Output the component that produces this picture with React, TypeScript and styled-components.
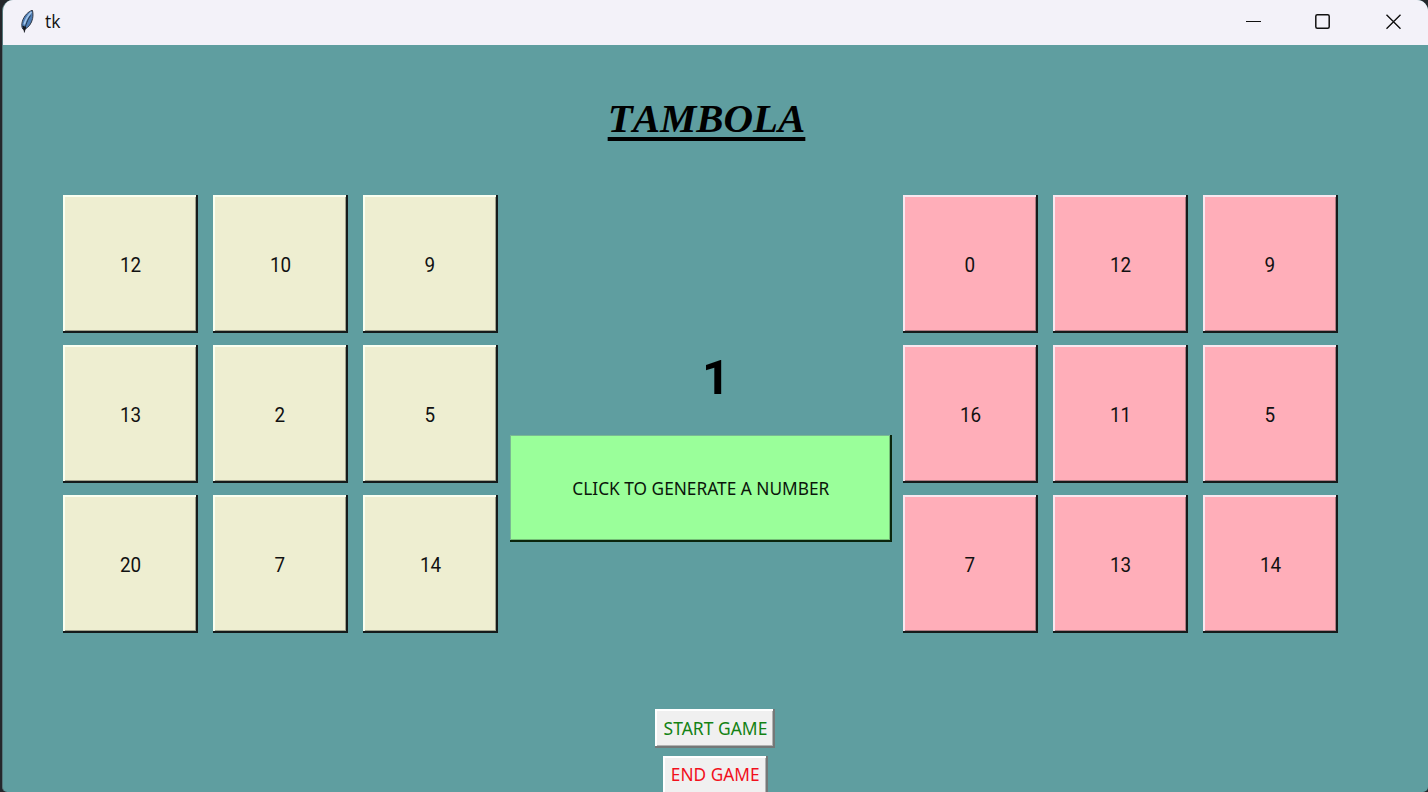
import React from 'react';
import styled, { createGlobalStyle } from 'styled-components';

const GlobalStyle = createGlobalStyle`
  * { box-sizing: border-box; }
  body { margin: 0; background: #24272b; overflow: hidden; }
`;

const Desktop = styled.div`
  width: 1428px;
  height: 792px;
  padding-left: 2px;
  background: #24272b;
  overflow: hidden;
`;

const Window = styled.div`
  height: 792px;
  display: flex;
  flex-direction: column;
  border-left: 1px solid #54777b;
  border-radius: 11px 11px 5px 5px;
  background: #5f9ea0;
  overflow: hidden;
`;

const TitleBar = styled.header`
  flex: 0 0 45px;
  display: flex;
  align-items: center;
  padding-left: 16px;
  background: #f3f2f9;
`;

const Caption = styled.span`
  flex: 1;
  margin: -3px 0 0 9px;
  font: 17.5px/24px 'Open Sans', 'Noto Sans', sans-serif;
  color: #111;
`;

const WindowControls = styled.div`
  display: flex;
  gap: 54px;
  padding: 0 27px 1px 0;
`;

const Content = styled.main`
  flex: 1;
  display: flex;
  flex-direction: column;
  align-items: center;
`;

const Title = styled.h1`
  margin: 50px 18px 0 0;
  height: 100px;
  font: italic bold 40.9px/48px 'Liberation Serif', 'Times New Roman', serif;
  font-kerning: none;
  color: #000;
  text-decoration: underline;
  text-decoration-thickness: 4px;
  text-decoration-skip-ink: none;
  text-underline-offset: 5px;
`;

const Board = styled.section`
  align-self: stretch;
  display: flex;
  height: 438px;
  padding-left: 60px;
`;

const Ticket = styled.div`
  display: grid;
  grid-template-columns: repeat(3, 135px);
  grid-auto-rows: 138px;
  gap: 12px 15px;
`;

const Cell = styled.button<{ $tone: 'beige' | 'pink'; $wide: boolean }>`
  padding: ${p => (p.$wide ? '2px 0 0 1px' : '2px 1px 0 0')};
  border: 0;
  background: ${p => (p.$tone === 'beige' ? '#eeeed1' : '#ffaeb9')};
  box-shadow:
    inset -2px -2px 0 #151b1b,
    inset 2px 2px 0 ${p => (p.$tone === 'beige' ? '#fafff0' : '#f8e8f0')},
    inset -3px -3px 0 ${p => (p.$tone === 'beige' ? '#a3a38d' : '#ae7b82')};
  font: 20.5px/24px Roboto, 'Liberation Sans', sans-serif;
  color: #111;
`;

const Caller = styled.div`
  width: 382px;
  margin: 0 11px 0 12px;
  padding-top: 155px;
  display: flex;
  flex-direction: column;
`;

const Drawn = styled.output`
  height: 85px;
  padding-left: 30px;
  font: bold 49px/56px Roboto, 'Liberation Sans', sans-serif;
  text-align: center;
  color: #000;
`;

const GenerateButton = styled.button`
  height: 107px;
  padding: 0 0 2px;
  border: 0;
  background: #9aff9a;
  box-shadow:
    inset -2px -2px 0 #0b250d,
    inset 1px 1px 0 #79b993,
    inset -3px -3px 0 #73bc75;
  font: 18px/24px 'Noto Sans', sans-serif;
  color: #0b160b;
`;

const ButtonText = styled.span<{ $scale: number }>`
  display: inline-block;
  white-space: nowrap;
  transform: scaleX(${p => p.$scale});
`;

const Actions = styled.div`
  display: flex;
  flex-direction: column;
  align-items: center;
  gap: 8px;
  margin: 76px 1px 0 0;
`;

const ActionButton = styled.button<{ $color: string; $width: number; $lift: number }>`
  width: ${p => p.$width}px;
  height: 39px;
  padding: 0 0 ${p => p.$lift}px 0;
  border: 0;
  display: flex;
  justify-content: center;
  align-items: center;
  background: #f0f0f0;
  box-shadow:
    inset -2px -2px 0 #747878,
    inset 2px 2px 0 #fff,
    inset -3px -3px 0 #b2b2b2;
  font: 18px/24px 'Noto Sans', sans-serif;
  color: ${p => p.$color};
`;

const Feather = () => (
  <svg width="17" height="26" viewBox="0 0 17 26">
    <path d="M13.4 0.2C9 1.6 5 6 3.4 11.2C2.4 14.6 2.6 17 3.8 19L5.6 19.4C9.5 17.5 12.6 13.5 13.6 8.5C14.2 5.4 14 2.5 13.4 0.2Z" fill="#4d7db5" stroke="#343b47" strokeWidth="1" />
    <path d="M12.4 2C9.4 5.2 6.6 9.5 5.2 14.6" fill="none" stroke="#a3c5e8" strokeWidth="1.8" />
    <path d="M11.5 5.5C8.6 10 6.3 14.5 5.4 22.5" fill="none" stroke="#1b2430" strokeWidth="0.8" />
    <path d="M3.2 15.5L5.2 22.5L7.2 17Z" fill="#17191e" />
  </svg>
);

const leftTicket = [12, 10, 9, 13, 2, 5, 20, 7, 14];
const rightTicket = [0, 12, 9, 16, 11, 5, 7, 13, 14];

export default function App() {
  return (
    <Desktop>
      <GlobalStyle />
      <Window>
        <TitleBar>
          <Feather />
          <Caption>tk</Caption>
          <WindowControls>
            <svg width="16" height="16" viewBox="0 0 16 16"><path d="M1 7.5H16" stroke="#111" strokeWidth="1" /></svg>
            <svg width="16" height="16" viewBox="0 0 16 16"><rect x="0.8" y="0.8" width="13.4" height="13.4" rx="1.5" fill="none" stroke="#111" strokeWidth="1.5" /></svg>
            <svg width="16" height="16" viewBox="0 0 16 16"><path d="M1.5 0.7L15.5 14.7M15.5 0.7L1.5 14.7" stroke="#111" strokeWidth="1.4" /></svg>
          </WindowControls>
        </TitleBar>
        <Content>
          <Title>TAMBOLA</Title>
          <Board>
            <Ticket>
              {leftTicket.map((n, i) => <Cell key={i} $tone="beige" $wide={n > 9}><ButtonText $scale={0.92}>{n}</ButtonText></Cell>)}
            </Ticket>
            <Caller>
              <Drawn>1</Drawn>
              <GenerateButton>
                <ButtonText $scale={0.96}>CLICK TO GENERATE A NUMBER</ButtonText>
              </GenerateButton>
            </Caller>
            <Ticket>
              {rightTicket.map((n, i) => <Cell key={i} $tone="pink" $wide={n > 9}><ButtonText $scale={0.92}>{n}</ButtonText></Cell>)}
            </Ticket>
          </Board>
          <Actions>
            <ActionButton $color="#148214" $width={120} $lift={2}>
              <ButtonText $scale={0.97}>START GAME</ButtonText>
            </ActionButton>
            <ActionButton $color="#f2101c" $width={105} $lift={4}>
              <ButtonText $scale={0.96}>END GAME</ButtonText>
            </ActionButton>
          </Actions>
        </Content>
      </Window>
    </Desktop>
  );
}
